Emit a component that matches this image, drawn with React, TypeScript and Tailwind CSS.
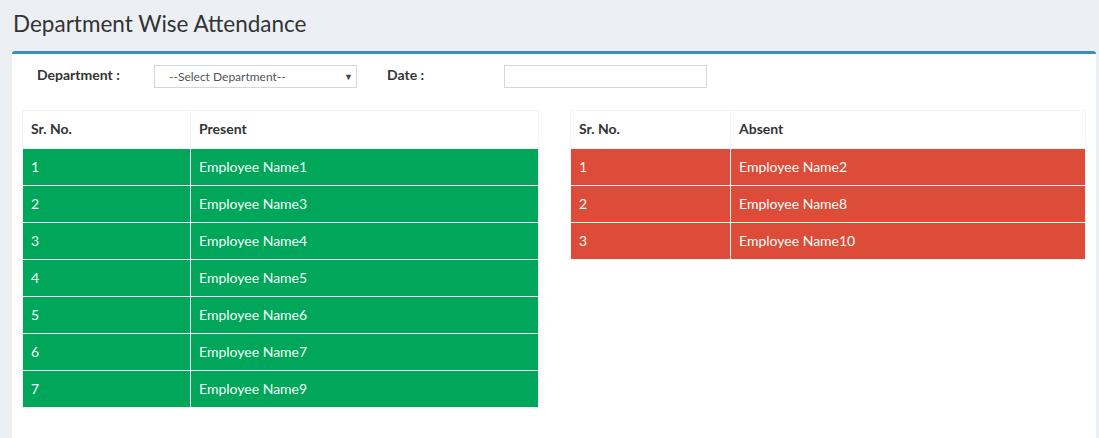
import React from "react";

const present = [
  "Employee Name1",
  "Employee Name3",
  "Employee Name4",
  "Employee Name5",
  "Employee Name6",
  "Employee Name7",
  "Employee Name9",
];

const absent = ["Employee Name2", "Employee Name8", "Employee Name10"];

function AttendanceTable({
  title,
  names,
  rowClass,
  firstCol,
}: {
  title: string;
  names: string[];
  rowClass: string;
  firstCol: string;
}) {
  return (
    <table className="w-full border-collapse text-[14px] leading-[20px]">
      <thead>
        <tr className="h-[38px] bg-white">
          <th className={`${firstCol} border border-[#f4f4f4] px-2 pb-[2px] text-left font-bold text-[#333]`}>
            Sr. No.
          </th>
          <th className="border border-[#f4f4f4] px-2 pb-[2px] text-left font-bold text-[#333]">
            {title}
          </th>
        </tr>
      </thead>
      <tbody>
        {names.map((n, i) => (
          <tr key={n} className={`h-[37px] ${rowClass}`}>
            <td className="border border-[#f4f4f4] px-2 pb-[1px] text-[#f4fff9]">{i + 1}</td>
            <td className="border border-[#f4f4f4] px-2 pb-[1px] text-[#f4fff9]">{n}</td>
          </tr>
        ))}
      </tbody>
    </table>
  );
}

export default function App() {
  return (
    <div
      className="min-h-[438px] bg-[#ecf0f5] pt-[9px] text-[#333]"
      style={{ fontFamily: "Lato, 'Liberation Sans', sans-serif" }}
    >
      <h1 className="pl-[13px] text-[22.5px] font-normal leading-[30px] text-[#333]">
        Department Wise Attendance
      </h1>
      <div className="ml-[12px] mr-[3px] mt-[12px] h-[400px] rounded-[3px] border-t-[3px] border-[#3c8dbc] bg-white shadow-[0_1px_1px_rgba(0,0,0,0.1)]">
        <div className="flex h-[34px] items-end text-[14px] leading-[20px]">
          <label className="mb-[2px] w-[142px] self-center pt-[9px] pl-[25px] font-bold">Department :</label>
          <div className="flex h-[23px] w-[203px] items-center justify-between border border-[#d2d6de] pl-[14px] pr-[3px] text-[12px] text-[#555]">
            <span>--Select Department--</span>
            <span className="text-[9px] text-[#444]">▼</span>
          </div>
          <label className="mb-[2px] ml-[30px] w-[117px] self-center pt-[9px] font-bold">Date :</label>
          <input className="h-[23px] w-[203px] border border-[#d2d6de] outline-none" />
        </div>
        <div className="mt-[22px] grid grid-cols-[517px_516px] gap-[31px] pl-[10px]">
          <div>
            <AttendanceTable
              title="Present"
              names={present}
              rowClass="bg-[#00a65a]"
              firstCol="w-[168px]"
            />
          </div>
          <div>
            <AttendanceTable
              title="Absent"
              names={absent}
              rowClass="bg-[#dd4b39]"
              firstCol="w-[160px]"
            />
          </div>
        </div>
      </div>
    </div>
  );
}
